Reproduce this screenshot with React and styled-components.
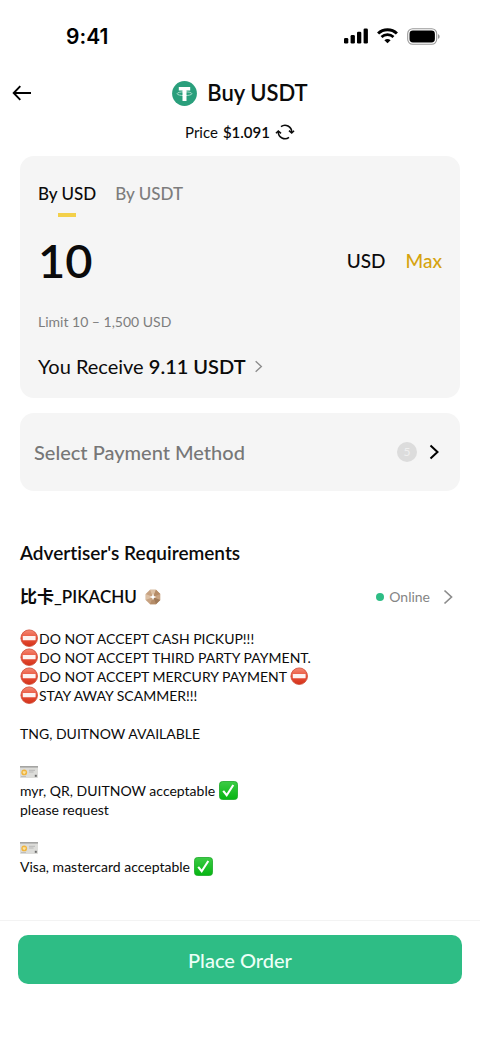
import { useState } from "react";
import styled, { createGlobalStyle } from "styled-components";

const GlobalStyle = createGlobalStyle`
  * { box-sizing: border-box; }
  body {
    margin: 0;
    background: #fff;
    color: #0b0b0b;
    font-family: Lato, "Noto Sans CJK SC", sans-serif;
    font-variant-ligatures: none;
  }
  button, input {
    font-family: inherit;
    color: inherit;
    border: 0;
    padding: 0;
    background: none;
  }
  button { cursor: pointer; }
  b { font-weight: 600; }
  svg { display: block; flex: none; }
`

const Page = styled.div`
  min-height: 100vh;
  display: flex;
  flex-direction: column;
`

const StatusBar = styled.div`
  height: 72px;
  padding: 0 40px 0 66px;
  display: flex;
  align-items: center;
  justify-content: space-between;
  color: #000;
`

const Clock = styled.span`
  font-family: Inter, sans-serif;
  font-size: 21px;
  font-weight: 600;
`

const StatusIcons = styled.div`
  display: flex;
  align-items: center;
  gap: 9px;
`

const Header = styled.header`
  height: 42px;
  padding: 0 12px;
  display: grid;
  grid-template-columns: 1fr auto 1fr;
  align-items: center;
`

const BackButton = styled.button`
  justify-self: start;
`

const Title = styled.h1`
  margin: 0;
  display: flex;
  align-items: center;
  gap: 10px;
  font-size: 22px;
  line-height: 28px;
  font-weight: 600;
`

const PriceRow = styled.div`
  height: 36px;
  display: flex;
  align-items: center;
  justify-content: center;
  gap: 5px;
  font-size: 15px;
  line-height: 20px;
`

const Main = styled.main`
  flex: 1;
  padding: 6px 20px 24px;
`

const Card = styled.section`
  padding: 26px 18px 20px;
  border-radius: 14px;
  background: #f5f5f5;
`

const Tabs = styled.div`
  display: flex;
  align-items: flex-start;
  gap: 19px;
`

const Tab = styled.button`
  display: flex;
  flex-direction: column;
  align-items: center;
  gap: 7px;
  font-size: 17px;
  line-height: 24px;
  font-weight: 500;
  color: ${({$active}) => $active ? "#0b0b0b" : "#7d7d7d"};

  &::after {
    content: "";
    width: 18px;
    height: 4px;
    background: ${({$active}) => $active ? "#f3d04a" : "transparent"};
  }
`

const AmountRow = styled.div`
  height: 54px;
  margin-top: 16px;
  display: flex;
  align-items: center;
  gap: 20px;
  font-size: 19px;
  font-weight: 500;
`

const AmountInput = styled.input`
  flex: 1;
  min-width: 0;
  height: 54px;
  font-size: 47px;
  font-weight: 600;
  outline: none;
`

const MaxButton = styled.button`
  font-size: 19px;
  font-weight: 500;
  color: #d6a30f;
`

const Limit = styled.div`
  margin-top: 25px;
  font-size: 14px;
  line-height: 20px;
  color: #7d7d7d;
`

const ReceiveButton = styled.button`
  margin-top: 22px;
  display: flex;
  align-items: center;
  gap: 8px;
  font-size: 20px;
  line-height: 24px;
`

const PaymentButton = styled.button`
  width: 100%;
  height: 78px;
  margin-top: 15px;
  padding: 0 21px 0 14px;
  display: flex;
  align-items: center;
  gap: 12px;
  border-radius: 14px;
  background: #f5f5f5;
`

const PaymentLabel = styled.span`
  flex: 1;
  text-align: left;
  font-size: 20px;
  line-height: 24px;
  font-weight: 500;
  color: #777;
`

const CountBadge = styled.span`
  width: 20px;
  height: 20px;
  border-radius: 50%;
  background: #dcdcdc;
  color: #efefef;
  font-size: 12px;
  line-height: 20px;
  text-align: center;
`

const SectionTitle = styled.h2`
  margin: 50px 0 0;
  font-size: 19px;
  line-height: 24px;
  font-weight: 600;
`

const Advertiser = styled.div`
  height: 24px;
  margin-top: 20px;
  display: flex;
  align-items: center;
  justify-content: space-between;
`

const Name = styled.div`
  display: flex;
  align-items: center;
  gap: 8px;
  font-size: 17px;
  line-height: 24px;
  font-weight: 600;
`

const OnlineButton = styled.button`
  padding-right: 7px;
  display: flex;
  align-items: center;
  font-size: 14px;
  line-height: 20px;
  color: #858585;

  svg { margin-left: 13px; }
`

const Dot = styled.i`
  width: 8px;
  height: 8px;
  margin-right: 5px;
  border-radius: 50%;
  background: #2ebd85;
`

const Notes = styled.div`
  margin-top: 20px;
`

const Line = styled.p`
  height: 19px;
  margin: 0;
  display: flex;
  align-items: center;
  gap: ${({$gap}) => $gap || 0}px;
  font-size: 14px;
  line-height: 19px;
  white-space: nowrap;
`

const Footer = styled.footer`
  padding: 14px 18px 56px;
  border-top: 1px solid #f3f3f3;
`

const OrderButton = styled.button`
  width: 100%;
  height: 49px;
  border-radius: 10px;
  background: #2ebd85;
  color: #ecfff7;
  font-size: 20px;
  font-weight: 500;
`

function Chevron({width, height, color, stroke}) {
  return (
    <svg width={width} height={height} viewBox="0 0 10 16" fill="none" aria-hidden="true">
      <path d="M1.5 1.5 8.5 8l-7 6.5" stroke={color} strokeWidth={stroke} />
    </svg>
  )
}

function SignalIcon() {
  return (
    <svg width="24" height="16" viewBox="0 0 24 16" aria-hidden="true">
      <rect x="0" y="10" width="4.3" height="5.6" rx="1.3" />
      <rect x="6.6" y="7" width="4.3" height="8.6" rx="1.3" />
      <rect x="13" y="3.7" width="4.3" height="11.9" rx="1.3" />
      <rect x="19.6" y="0.4" width="4.3" height="15.2" rx="1.3" />
    </svg>
  )
}

function WifiIcon() {
  return (
    <svg width="21" height="16" viewBox="0 0 21 16" fill="none" stroke="#000" aria-hidden="true">
      <path d="M1.1 5.5a13.6 13.6 0 0 1 18.8 0" strokeWidth="3" />
      <path d="M4.5 9a8.7 8.7 0 0 1 12 0" strokeWidth="2.7" />
      <path d="M7.4 12.3a4.6 4.6 0 0 1 6.2 0l-3.1 3z" fill="#000" stroke="none" />
    </svg>
  )
}

function BatteryIcon() {
  return (
    <svg width="33" height="17" viewBox="0 0 33 17" aria-hidden="true">
      <rect x="0.7" y="0.7" width="29" height="15.6" rx="5" fill="none" stroke="#999" strokeWidth="1.1" />
      <rect x="2.5" y="2.6" width="25.4" height="11.8" rx="3.4" />
      <path d="M31 6.2c2.2.6 2.2 4 0 4.6z" fill="#999" />
    </svg>
  )
}

function BackIcon() {
  return (
    <svg width="20" height="16" viewBox="0 0 20 16" fill="none" stroke="#000" strokeWidth="1.9" aria-hidden="true">
      <path d="M8.3 1.2 1.7 8l6.6 6.8M1.7 8H19" />
    </svg>
  )
}

function TetherIcon() {
  return (
    <svg width="25" height="25" viewBox="0 0 25 25" aria-hidden="true">
      <circle cx="12.5" cy="12.5" r="12.4" fill="#2a9f7c" />
      <ellipse cx="12.5" cy="12.7" rx="7.4" ry="1.9" fill="none" stroke="#a9dccb" strokeWidth="1" />
      <path d="M6.8 6h11.4v3.6h-3.7v10.3h-4V9.600H6.800z" fill="#fff" />
    </svg>
  )
}

function RefreshIcon() {
  return (
    <svg width="20" height="16" viewBox="0 0 20 16" fill="none" stroke="#0b0b0b" strokeWidth="1.6" aria-hidden="true">
      <path d="M6 2.600A6.700 6.700 0 0 1 16.700 8" />
      <path d="M14 13.400A6.700 6.700 0 0 1 3.300 8" />
      <path d="m14 6.700 2.700 2.300 2.300-2.300" />
      <path d="m1 9.300 2.300-2.300L6 9.300" />
    </svg>
  )
}

function MedalIcon() {
  return (
    <svg width="16" height="16" viewBox="0 0 16 16" aria-hidden="true">
      <path d="M5 .7h6L15.300 5v6L11 15.300H5L.7 11V5z" fill="#c7a281" />
      <path d="M5 .7h6L8 8zM.7 5v6L8 8z" fill="#dcc0a4" />
      <path d="M11 .7 15.300 5 8 8zM5 15.300h6L8 8z" fill="#b58c68" />
      <path d="M15.300 11 11 15.300 8 8z" fill="#a07a58" />
      <path d="m8 4.800.9 2.300 2.300.9-2.300.9L8 11.200l-.9-2.300L4.800 8l2.300-.9z" fill="#fff" />
    </svg>
  )
}

function NoEntry() {
  return (
    <svg width="19" height="19" viewBox="0 0 19 19" role="img" aria-label="No entry">
      <defs>
        <linearGradient id="red" x1="0" y1="0" x2="0" y2="1">
          <stop offset="0" stopColor="#f58a74" />
          <stop offset="0.5" stopColor="#e8523a" />
          <stop offset="1" stopColor="#d33118" />
        </linearGradient>
      </defs>
      <circle cx="9.2" cy="9.2" r="8.3" fill="url(#red)" stroke="#cf4a35" strokeWidth="0.8" />
      <rect x="2.8" y="7" width="12.8" height="4.3" rx="0.6" fill="#fdf3f1" />
    </svg>
  )
}

function CheckMark() {
  return (
    <svg width="19" height="19" viewBox="0 0 19 19" role="img" aria-label="Check">
      <defs>
        <linearGradient id="green" x1="0" y1="0" x2="0" y2="1">
          <stop offset="0" stopColor="#3ccb45" />
          <stop offset="1" stopColor="#06b512" />
        </linearGradient>
      </defs>
      <rect x="0.5" y="0.5" width="18" height="18" rx="3" fill="url(#green)" stroke="#1aa827" strokeWidth="0.8" />
      <path d="m4.2 9.8 3.500 4.400L14.300 4" fill="none" stroke="#fff" strokeWidth="2.1" />
    </svg>
  )
}

function IdCard() {
  return (
    <svg width="18" height="12" viewBox="0 0 18 12" role="img" aria-label="Identification card">
      <rect width="18" height="12" rx="0.8" fill="#dcdcd9" />
      <rect width="18" height="1.6" fill="#a4a4a2" />
      <circle cx="4.2" cy="6.4" r="2.9" fill="#f0b43c" />
      <path d="M2.8 5.200h2.800v1.600L4.200 8.200 2.800 6.800z" fill="#f9e2a4" />
      <path d="M9 4.300h6M9 6h4.500" stroke="#a9a9a9" strokeWidth="0.7" />
      <path d="M1 10.500h5" stroke="#a9a9a9" strokeWidth="0.6" />
      <rect x="14.8" y="8.8" width="2" height="2" fill="#6b6b6b" />
    </svg>
  )
}

const tabData = [
  'By USD',
  'By USDT'
]

function AmountCard() {
  const [tab, setTab] = useState(tabData[0])
  const [amount, setAmount] = useState("10")

  return (
    <Card>
      <Tabs>
        {tabData.map((name) =>
          <Tab key={name} $active={name === tab} onClick={() => setTab(name)}>{name}</Tab>
        )}
      </Tabs>
      <AmountRow>
        <AmountInput
          aria-label="Amount"
          inputMode="decimal"
          value={amount}
          onChange={({target}) => setAmount(target.value)}
        />
        <span>USD</span>
        <MaxButton onClick={() => setAmount("1500")}>Max</MaxButton>
      </AmountRow>
      <Limit>Limit 10 – 1,500 USD</Limit>
      <ReceiveButton>
        <span>You Receive <b>9.11 USDT</b></span>
        <Chevron width={9} height={13} color="#8c8c8c" stroke={1.7} />
      </ReceiveButton>
    </Card>
  )
}

function Requirements() {
  return (
    <Notes>
      <Line><NoEntry />DO NOT ACCEPT CASH PICKUP!!!</Line>
      <Line><NoEntry />DO NOT ACCEPT THIRD PARTY PAYMENT.</Line>
      <Line><NoEntry /><span>DO NOT ACCEPT MERCURY PAYMENT&nbsp;</span><NoEntry /></Line>
      <Line><NoEntry />STAY AWAY SCAMMER!!!</Line>
      <Line />
      <Line>TNG, DUITNOW AVAILABLE</Line>
      <Line />
      <Line><IdCard /></Line>
      <Line $gap={4}>myr, QR, DUITNOW acceptable <CheckMark /></Line>
      <Line>please request</Line>
      <Line />
      <Line><IdCard /></Line>
      <Line $gap={4}>Visa, mastercard acceptable <CheckMark /></Line>
    </Notes>
  )
}

export default function App() {
  return (
    <Page>
      <GlobalStyle />
      <StatusBar>
        <Clock>9:41</Clock>
        <StatusIcons>
          <SignalIcon />
          <WifiIcon />
          <BatteryIcon />
        </StatusIcons>
      </StatusBar>
      <Header>
        <BackButton aria-label="Back"><BackIcon /></BackButton>
        <Title><TetherIcon />Buy USDT</Title>
      </Header>
      <PriceRow>
        <span>Price</span>
        <b>$1.091</b>
        <button aria-label="Refresh price"><RefreshIcon /></button>
      </PriceRow>
      <Main>
        <AmountCard />
        <PaymentButton>
          <PaymentLabel>Select Payment Method</PaymentLabel>
          <CountBadge>5</CountBadge>
          <Chevron width={10} height={16} color="#000" stroke={2} />
        </PaymentButton>
        <SectionTitle>Advertiser's Requirements</SectionTitle>
        <Advertiser>
          <Name>比卡_PIKACHU <MedalIcon /></Name>
          <OnlineButton>
            <Dot />
            Online
            <Chevron width={10} height={16} color="#8c8c8c" stroke={1.7} />
          </OnlineButton>
        </Advertiser>
        <Requirements />
      </Main>
      <Footer>
        <OrderButton>Place Order</OrderButton>
      </Footer>
    </Page>
  )
}
